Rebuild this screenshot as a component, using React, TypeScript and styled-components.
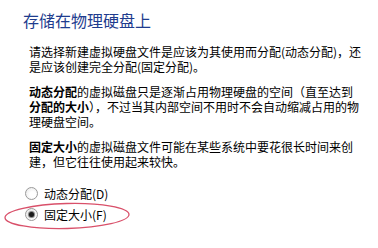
import { FC } from 'react';
import styled, { createGlobalStyle } from 'styled-components';

const GlobalStyle = createGlobalStyle`
    html, body {
        margin: 0;
        padding: 0;
        background: #ffffff;
    }
    body {
        font-family: "Noto Sans CJK SC", "Noto Sans", sans-serif;
        color: #000000;
    }
`;

const Page = styled.div`
    width: 378px;
    height: 248px;
    box-sizing: border-box;
    padding: 12px 0 0 23px;
    overflow: hidden;
`;

const Title = styled.h1`
    margin: 0;
    font-size: 16px;
    line-height: 16px;
    font-weight: normal;
    color: #1e3c8e;
`;

const Body = styled.div`
    margin-top: 16px;
    padding-left: 6px;
`;

const Para = styled.p`
    margin: 0 0 10px;
    font-size: 12px;
    line-height: 15px;
`;

const Strong = styled.span`
    font-weight: bold;
`;

const RadioGroup = styled.div`
    position: relative;
    margin-top: 14px;
    margin-left: -4px;
    display: flex;
    flex-direction: column;
`;

const RadioRow = styled.label`
    display: flex;
    align-items: center;
    gap: 6px;
    height: 21px;
    font-size: 12px;
    line-height: 21px;
`;

const RadioDot = styled.span<{ $checked?: boolean }>`
    width: 11px;
    height: 11px;
    border-radius: 50%;
    border: 1px solid #9a9a9a;
    background: radial-gradient(circle at 60% 60%, #ffffff 30%, #e4e4e4 100%);
    display: flex;
    align-items: center;
    justify-content: center;

    &::after {
        content: '';
        width: 5px;
        height: 5px;
        border-radius: 50%;
        background: ${p => (p.$checked ? '#1a1a1a' : 'transparent')};
        box-shadow: ${p => (p.$checked ? '0 0 1px 1px #777' : 'none')};
    }
`;

// the hand-drawn red ring round the chosen option
const Ring = styled.svg`
    position: absolute;
    left: -23px;
    top: 18px;
    pointer-events: none;
`;

type RadioProps = {
    checked?: boolean;
    children?: any;
};

const Radio: FC<RadioProps> = ({ checked, children }) => (
    <RadioRow>
        <RadioDot $checked={checked} />
        <span>{children}</span>
    </RadioRow>
);

const App: FC = () => {
    return (
        <Page>
            <GlobalStyle />
            <Title>存储在物理硬盘上</Title>
            <Body>
                <Para>
                    请选择新建虚拟硬盘文件是应该为其使用而分配(动态分配)，还<br />
                    是应该创建完全分配(固定分配)。
                </Para>
                <Para>
                    <Strong>动态分配</Strong>的虚拟磁盘只是逐渐占用物理硬盘的空间（直至达到<br />
                    <Strong>分配的大小</Strong>），不过当其内部空间不用时不会自动缩减占用的物<br />
                    理硬盘空间。
                </Para>
                <Para>
                    <Strong>固定大小</Strong>的虚拟磁盘文件可能在某些系统中要花很长时间来创<br />
                    建，但它往往使用起来较快。
                </Para>
                <RadioGroup>
                    <Radio>动态分配(D)</Radio>
                    <Radio checked>固定大小(F)</Radio>
                    <Ring width="130" height="30" viewBox="0 0 130 30">
                        <ellipse
                            cx="65"
                            cy="15"
                            rx="62"
                            ry="12.5"
                            fill="none"
                            stroke="#d9506a"
                            strokeWidth="1.3"
                            transform="rotate(-1.5 65 15)"
                        />
                    </Ring>
                </RadioGroup>
            </Body>
        </Page>
    );
};

export default App;
